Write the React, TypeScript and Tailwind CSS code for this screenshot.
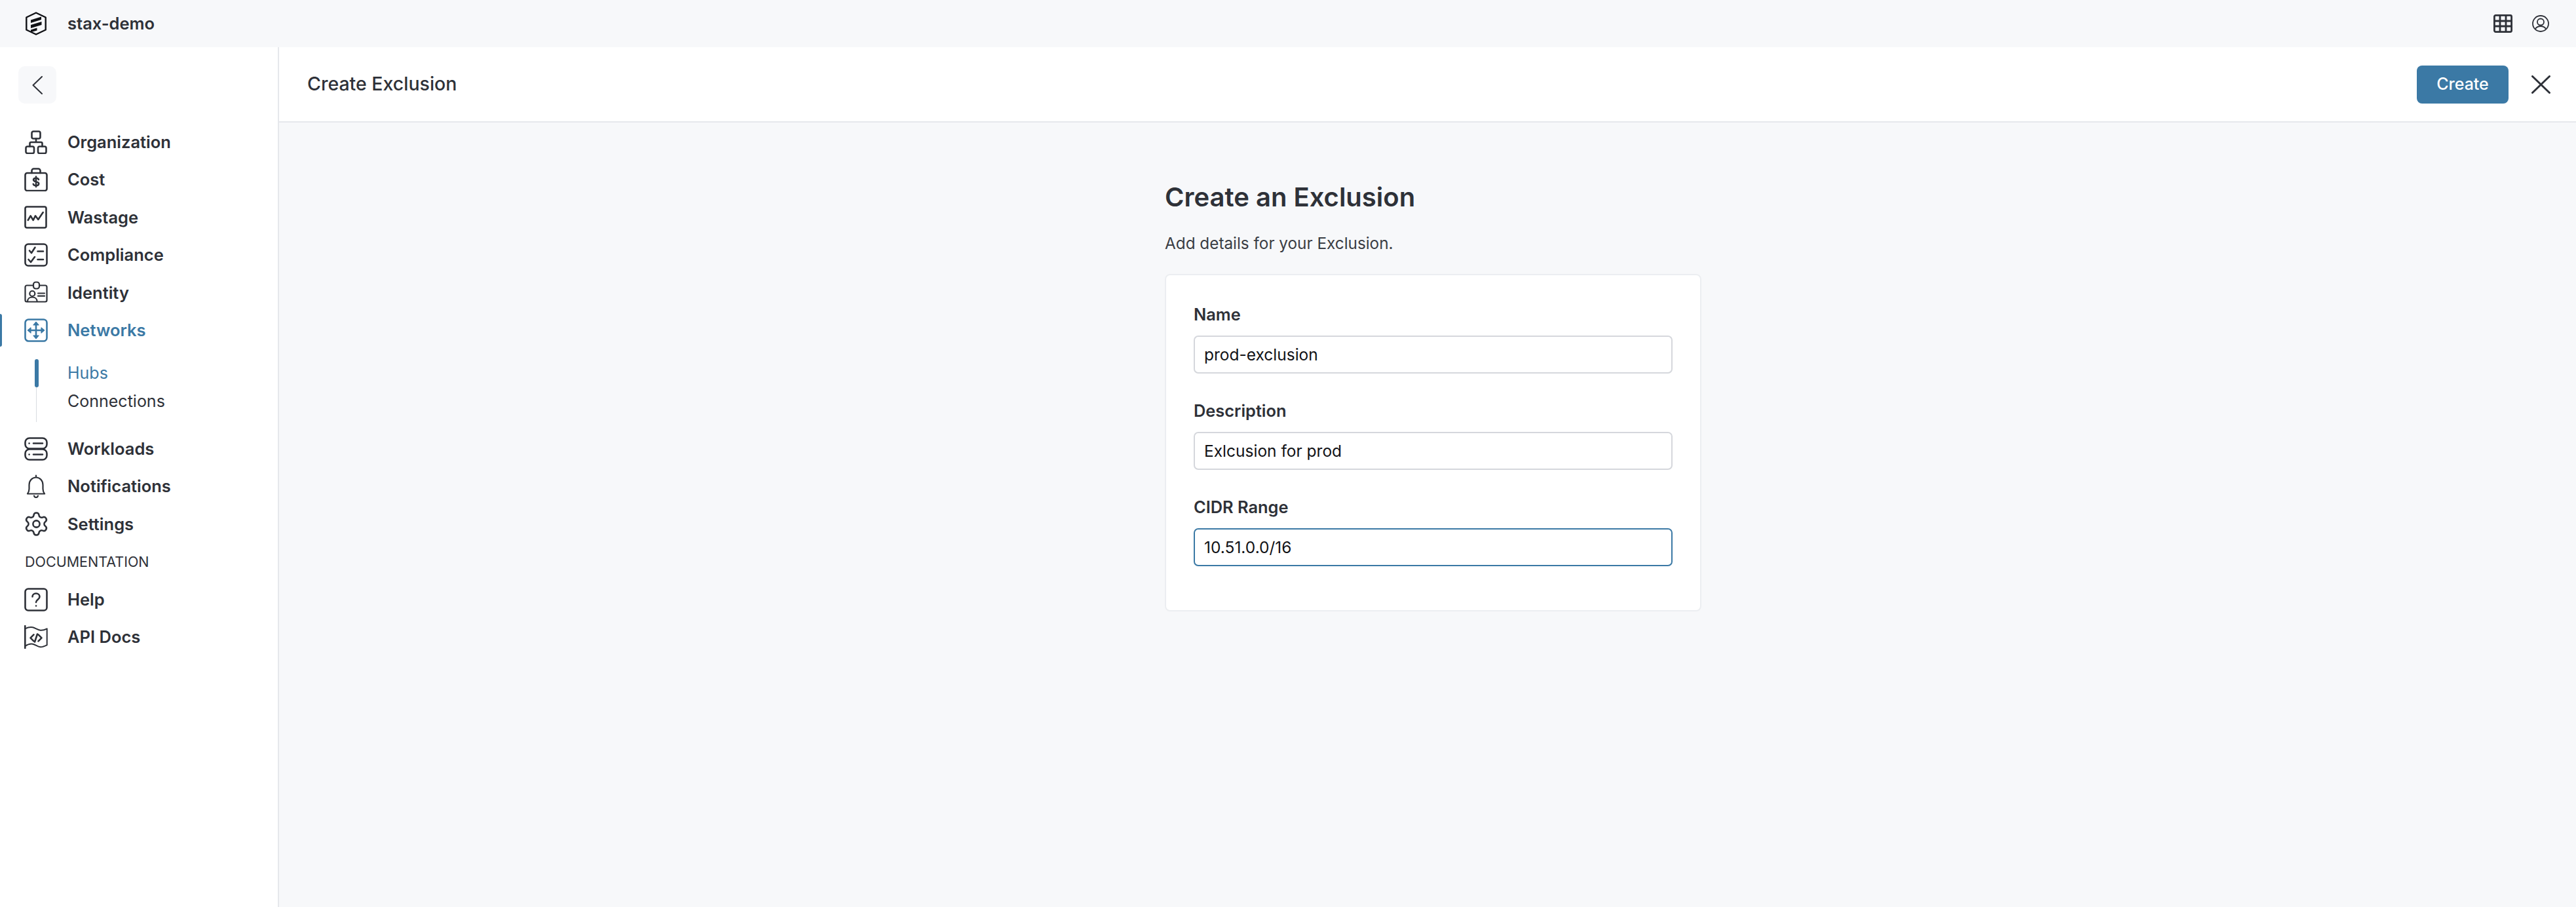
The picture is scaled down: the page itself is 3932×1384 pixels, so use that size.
import type { ReactNode } from "react";
import { Settings } from "lucide-react";

const Icon = ({ children, className = "text-[#2e3138]" }: { children: ReactNode; className?: string }) => (
  <svg
    viewBox="0 0 36 36"
    fill="none"
    stroke="currentColor"
    strokeWidth="2.6"
    strokeLinecap="round"
    strokeLinejoin="round"
    className={`h-9 w-9 shrink-0 ${className}`}
  >
    {children}
  </svg>
);

const OrgIcon = () => (
  <Icon>
    <rect x="11.5" y="1.5" width="13" height="11" rx="2.5" />
    <rect x="2.5" y="24.5" width="12.5" height="10.5" rx="2.5" />
    <rect x="21" y="24.5" width="12.5" height="10.5" rx="2.5" />
    <path d="M18 12.5V18M8.5 24.5V20a2 2 0 0 1 2-2h15a2 2 0 0 1 2 2v4.5" />
  </Icon>
);

const CostIcon = () => (
  <Icon>
    <rect x="1.5" y="8" width="33" height="27" rx="3" />
    <path d="M11.5 8V4.5a3 3 0 0 1 3-3h7a3 3 0 0 1 3 3V8" />
    <path d="M22 18c-.5-1.500-2-2.300-4-2.300-2.400 0-3.900 1.100-3.900 2.800 0 3.900 8.100 1.800 8.100 5.800 0 1.800-1.800 2.900-4.200 2.900-2.200 0-3.700-.9-4.200-2.400M18 13.500v15.500" strokeWidth="2.600" />
  </Icon>
);

const WastageIcon = () => (
  <Icon>
    <rect x="1.500" y="1.500" width="32" height="32" rx="2.500" />
    <path d="M5.700 22l4-6.700 4 6.700 3.300-6.700 4.300 5.700 7.400-11" />
  </Icon>
);

const ComplianceIcon = () => (
  <Icon>
    <rect x="1.500" y="1.500" width="33" height="33" rx="4.500" />
    <path d="M8 11.500l3 3.500 5.500-8.500M6.500 25l3.500 4 6-8M20.500 12.500h8.500M20.500 25h8.500" />
  </Icon>
);

const IdentityIcon = () => (
  <Icon>
    <path d="M13.700 6.500H4a2.500 2.500 0 0 0-2.500 2.500v20A2.500 2.500 0 0 0 4 31.500h28a2.500 2.500 0 0 0 2.500-2.500V9A2.500 2.500 0 0 0 32 6.500h-9" strokeWidth="2.200" />
    <rect x="14" y="1.500" width="9" height="10" rx="3.500" strokeWidth="2.200" />
    <circle cx="12.300" cy="19" r="4" strokeWidth="2.200" />
    <path d="M5 31c0-4 3-6.500 7.300-6.500s7.300 2.500 7.300 6.500M21 18.500h10M21 22.700h10" strokeWidth="2.200" />
  </Icon>
);

const NetworksIcon = () => (
  <Icon className="text-[#3b79a5]">
    <rect x="1.500" y="1.500" width="33" height="33" rx="5" />
    <path d="M18 6.500v23M6.500 18h23" />
    <path d="M14 10l4-4.500 4 4.500zM14 26l4 4.500 4-4.500zM10 14l-4.500 4 4.500 4zM26 14l4.500 4-4.500 4z" fill="currentColor" strokeWidth="1.200" />
  </Icon>
);

const WorkloadsIcon = () => (
  <Icon>
    <rect x="1.500" y="1.500" width="33" height="16" rx="6.500" />
    <rect x="1.500" y="18.500" width="33" height="16" rx="6.500" />
    <path d="M7.500 9.500h.1M7.500 26.500h.1M14 9.500h14M14 26.500h14" />
  </Icon>
);

const BellIcon = () => (
  <Icon>
    <path d="M18 1.500v3M5 29.500c1.500-2 2.500-4 2.500-7.500v-6C7.500 9.500 12 4.500 18 4.500S28.500 9.500 28.500 16v6c0 3.500 1 5.500 2.500 7.500zM15 32.500c.3 1.500 1.500 2.500 3 2.500s2.700-1 3-2.500" strokeWidth="2.200" />
  </Icon>
);

const HelpIcon = () => (
  <Icon>
    <rect x="1.500" y="1.500" width="33" height="33" rx="4.500" />
    <path d="M12.500 13.500c0-3 2.500-5 5.500-5s5.500 2 5.500 5c0 4.500-5.500 4.500-5.500 8.500M18 27.500h.1" />
  </Icon>
);

const ApiDocsIcon = () => (
  <Icon>
    <path d="M1.300 1v34" />
    <path d="M1.300 5.300C5 3.500 9 2.500 13 3.300c4 .9 7.500 4 11.700 4.400 3.500.3 7-.9 10-2.400v25c-3 1.500-6.500 3.300-10 3-4.200-.4-7.700-3.700-11.700-4.600-4-.8-8 .7-11.700 3.300" strokeWidth="2" />
    <path d="M14.500 14.300L9.500 19.300l5 5M21.500 14.300l5 5-5 5M20 13.500l-4 12" />
  </Icon>
);

const SettingsIcon = () => (
  <span className="flex h-9 w-9 shrink-0 items-center justify-center">
    <Settings size={41} strokeWidth={1.5} className="shrink-0 text-[#2e3138]" />
  </span>
);

const NavItem = ({ icon, label, active }: { icon: ReactNode; label: string; active?: boolean }) => (
  <div className="relative flex h-[57.5px] items-center pl-[37px]">
    {active && <span className="absolute left-0 top-[3px] h-[50px] w-[3px] rounded-r bg-[#3b79a5]" />}
    {icon}
    <span className={`ml-[30px] text-[25.5px] font-semibold ${active ? "text-[#3b79a5]" : "text-[#2e3138]"}`}>{label}</span>
  </div>
);

const Field = ({ label, value, focused }: { label: string; value: string; focused?: boolean }) => (
  <div className="mb-[39px]">
    <label className="mb-[14px] block h-9 text-[25.4px] font-semibold leading-9 text-[#2e3138]">{label}</label>
    <input
      readOnly
      value={value}
      className={`block h-[58px] w-full rounded-[7px] bg-white pl-[14px] text-[24.5px] text-[#111216] outline-none ${
        focused ? "border-2 border-[#3b79a5]" : "border-2 border-[#d5d7dc]"
      }`}
    />
  </div>
);

export default function App() {
  return (
    <div className="flex h-[1384px] w-[3932px] flex-col overflow-hidden bg-[#f7f8fa] font-['Inter',sans-serif] text-[#2e3138]">
      {/* Top bar */}
      <header className="flex h-[72px] shrink-0 items-center bg-[#f7f8fa] pl-[39px] pr-[41px]">
        <svg viewBox="0 0 32 36" className="h-9 w-8 shrink-0 text-[#111216]">
          <path d="M16 1.500L30.700 8.500v19L16 34.500 1.300 27.500v-19z" fill="none" stroke="currentColor" strokeWidth="2.400" strokeLinejoin="round" />
          <path d="M8 12.500L24 7.500V12L8 17zM8 20L24.500 15v5L8 25zM8 27.500L17.500 24.500v4L8 31.300z" fill="currentColor" />
        </svg>
        <span className="ml-[32px] text-[25.5px] font-semibold">stax-demo</span>
        <div className="ml-auto flex items-center gap-[30px]">
          <svg viewBox="0 0 29 28" className="h-7 w-[29px]" fill="none" stroke="currentColor" strokeWidth="2.800" strokeLinejoin="round">
            <rect x="1.400" y="1.400" width="26.200" height="25.200" rx="2" />
            <path d="M10 1.400v25.200M19 1.400v25.200M1.400 10h26.200M1.400 18h26.200" />
          </svg>
          <svg viewBox="0 0 26 26" className="h-[26px] w-[26px]" fill="none" stroke="currentColor" strokeWidth="1.800">
            <circle cx="13" cy="13" r="12" />
            <circle cx="13" cy="10.500" r="5" />
            <path d="M4.500 21.500c2-3 5-4.500 8.500-4.500s6.500 1.500 8.500 4.500" />
          </svg>
        </div>
      </header>

      <div className="flex min-h-0 flex-1">
        {/* Sidebar */}
        <aside className="w-[426px] shrink-0 border-r-2 border-[#e6e8ec] bg-white">
          <div className="pl-[28px] pt-[29px]">
            <button className="flex h-[57px] w-[58px] items-center justify-center rounded-[10px] bg-[#f7f8fa]">
              <svg viewBox="0 0 16 28" className="h-7 w-4" fill="none" stroke="#2e3138" strokeWidth="2" strokeLinecap="round" strokeLinejoin="round">
                <path d="M15 1L1.500 14 15 27" />
              </svg>
            </button>
          </div>
          <nav className="mt-[30px]">
            <NavItem icon={<OrgIcon />} label="Organization" />
            <NavItem icon={<CostIcon />} label="Cost" />
            <NavItem icon={<WastageIcon />} label="Wastage" />
            <NavItem icon={<ComplianceIcon />} label="Compliance" />
            <NavItem icon={<IdentityIcon />} label="Identity" />
            <NavItem icon={<NetworksIcon />} label="Networks" active />
            <div className="relative mb-[22px] mt-[15px] ml-[103px] h-[86px]">
              <span className="absolute -left-[48px] top-[10px] h-[86px] w-px bg-[#d9dce1]" />
              <span className="absolute -left-[50px] top-0 h-[43px] w-[6px] rounded-full bg-[#3b79a5]" />
              <div className="flex h-[43px] items-center text-[25px] text-[#3b79a5]">Hubs</div>
              <div className="flex h-[43px] items-center text-[25px] text-[#2e3138]">Connections</div>
            </div>
            <NavItem icon={<WorkloadsIcon />} label="Workloads" />
            <NavItem icon={<BellIcon />} label="Notifications" />
            <NavItem icon={<SettingsIcon />} label="Settings" />
            <div className="flex h-[57.5px] items-center pl-[38px] text-[21.5px] text-[#2e3138]">DOCUMENTATION</div>
            <NavItem icon={<HelpIcon />} label="Help" />
            <NavItem icon={<ApiDocsIcon />} label="API Docs" />
          </nav>
        </aside>

        {/* Main */}
        <main className="min-w-0 flex-1">
          <div className="flex h-[115px] items-center border-b-2 border-[#e6e8ec] bg-white pl-[43px] pr-[39px]">
            <h1 className="text-[28.5px] font-medium text-[#2e3138]">Create Exclusion</h1>
            <button className="ml-auto h-[58px] w-[140px] rounded-[8px] bg-[#3b79a5] text-[25px] font-medium text-white">Create</button>
            <svg viewBox="0 0 29 28" className="ml-[35px] h-7 w-[29px]" fill="none" stroke="#2e3138" strokeWidth="3" strokeLinecap="round">
              <path d="M1.500 1.500l26 25M27.500 1.500l-26 25" />
            </svg>
          </div>

          <div className="ml-[1352px] w-[819px] pt-[81px]">
            <h2 className="h-[66px] text-[40px] font-semibold leading-[66px] text-[#2e3138]">Create an Exclusion</h2>
            <p className="mt-[19px] h-9 text-[24.3px] leading-9 text-[#3a3d44]">Add details for your Exclusion.</p>
            <div className="mt-[29px] h-[515px] rounded-[8px] border-2 border-[#eceef1] bg-white px-[42px] pt-[42px]">
              <Field label="Name" value="prod-exclusion" />
              <Field label="Description" value="Exlcusion for prod" />
              <Field label="CIDR Range" value="10.51.0.0/16" focused />
            </div>
          </div>
        </main>
      </div>
    </div>
  );
}
